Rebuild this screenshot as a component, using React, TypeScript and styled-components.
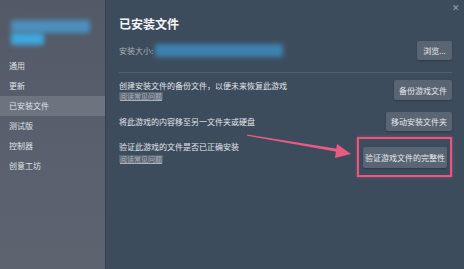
import { FC } from 'react';
import styled, { createGlobalStyle } from 'styled-components';

const GlobalStyle = createGlobalStyle`
  html, body { margin: 0; padding: 0; background: #3d4c5d; }
  body { font-family: 'Noto Sans CJK SC', 'Noto Sans', sans-serif; }
`;

const Frame = styled.div`
  display: flex;
  width: 464px;
  height: 269px;
  overflow: hidden;
`;

const Sidebar = styled.nav`
  width: 105px;
  flex-shrink: 0;
  background: linear-gradient(180deg, #535966 0%, #5a606d 60%, #5e6370 100%);
  display: flex;
  flex-direction: column;
`;

const Profile = styled.div`
  height: 56px;
  padding: 20px 0 0 11px;
  box-sizing: border-box;
  display: flex;
  flex-direction: column;
`;

const BlurBar = styled.div<{ $w: number; $h: number; $c: string }>`
  width: ${({ $w }) => $w}px;
  height: ${({ $h }) => $h}px;
  background: ${({ $c }) => $c};
  filter: blur(2.5px);
  border-radius: 2px;
`;

const NavItem = styled.div<{ $active?: boolean }>`
  height: 20px;
  line-height: 20px;
  padding-left: 9px;
  font-size: 8px;
  color: #dfe2e8;
  background: ${({ $active }) => ($active ? '#6d737f' : 'transparent')};
`;

const Main = styled.main`
  position: relative;
  flex: 1;
  background: #3d4c5d;
  border-left: 1px solid #36414f;
  padding: 16px 12px 0 13px;
  display: flex;
  flex-direction: column;
`;

const Close = styled.div`
  position: absolute;
  top: 1px;
  right: 4px;
  font-size: 9px;
  color: #9aa3ad;
`;

const Title = styled.h2`
  margin: 0;
  font-size: 12px;
  line-height: 16px;
  font-weight: 700;
  color: #f3f4f6;
`;

const Row = styled.div<{ $top: number; $h: number }>`
  display: flex;
  align-items: center;
  justify-content: space-between;
  margin-top: ${({ $top }) => $top}px;
  min-height: ${({ $h }) => $h}px;
`;

const TextBlock = styled.div<{ $gap?: number; $offset?: number }>`
  display: flex;
  flex-direction: column;
  align-items: flex-start;
  gap: ${({ $gap }) => $gap ?? 1}px;
  ${({ $offset }) => ($offset !== undefined ? `align-self: flex-start; margin-top: ${$offset}px;` : '')}
`;

const Desc = styled.span`
  font-size: 8px;
  line-height: 10px;
  color: #e1e4ea;
  white-space: nowrap;
`;

const Label = styled.span`
  font-size: 8px;
  line-height: 10px;
  color: #a8afb8;
`;

const SizeValue = styled.div`
  display: flex;
  align-items: center;
  gap: 2px;
`;

const FaqLink = styled.span`
  font-size: 7px;
  line-height: 8px;
  padding: 0 1px;
  color: #aab0b8;
  background: rgba(160, 168, 178, 0.28);
  text-decoration: underline;
`;

const Button = styled.button<{ $w: number; $h?: number }>`
  width: ${({ $w }) => $w}px;
  height: ${({ $h }) => $h ?? 19}px;
  border: none;
  border-radius: 2px;
  padding: 0;
  background: #5a6573;
  color: #e4e7ec;
  font-family: inherit;
  font-size: 8px;
  box-shadow: 0 1px 2px rgba(0, 0, 0, 0.25);
`;

const Divider = styled.hr`
  border: none;
  height: 1px;
  background: #52606f;
  margin: 12px 0 0 0;
`;

const Highlight = styled.div`
  border: 2px solid #e9577f;
  padding: 3px 3px 7px 4px;
  box-shadow: 0 0 3px rgba(233, 87, 127, 0.5);
`;

const Annotation = styled.svg`
  position: absolute;
  left: 0;
  top: 0;
  width: 100%;
  height: 100%;
  pointer-events: none;
`;

const navItems = ['通用', '更新', '已安装文件', '测试版', '控制器', '创意工坊'];

const App: FC = () => (
  <>
    <GlobalStyle />
    <Frame>
      <Sidebar>
        <Profile>
          <BlurBar $w={79} $h={13} $c={'#4d8fbd'} />
          <BlurBar $w={33} $h={12} $c={'#3fa8df'} />
        </Profile>
        {navItems.map(item => (
          <NavItem key={item} $active={item === '已安装文件'}>
            {item}
          </NavItem>
        ))}
      </Sidebar>
      <Main>
        <Close>✕</Close>
        <Title>已安装文件</Title>
        <Row $top={9} $h={19}>
          <SizeValue>
            <Label>安装大小:</Label>
            <BlurBar $w={128} $h={13} $c={'#3d82b0'} />
          </SizeValue>
          <Button $w={35}>浏览...</Button>
        </Row>
        <Divider />
        <Row $top={7} $h={20}>
          <TextBlock>
            <Desc>创建安装文件的备份文件，以便未来恢复此游戏</Desc>
            <FaqLink>阅读常见问题</FaqLink>
          </TextBlock>
          <Button $w={58} $h={20}>备份游戏文件</Button>
        </Row>
        <Row $top={12} $h={19}>
          <Desc>将此游戏的内容移至另一文件夹或硬盘</Desc>
          <Button $w={66}>移动安装文件夹</Button>
        </Row>
        <Row $top={6} $h={35}>
          <TextBlock $gap={3} $offset={5}>
            <Desc>验证此游戏的文件是否已正确安装</Desc>
            <FaqLink>阅读常见问题</FaqLink>
          </TextBlock>
          <Highlight>
            <Button $w={84} $h={21}>验证游戏文件的完整性</Button>
          </Highlight>
        </Row>
        <Annotation viewBox={'0 0 358 269'}>
          <polygon points="141,134.5 236,149.5 235,152.5 141,135.8" fill="#ea5a82" />
          <polygon points="245,154 231,144 229,158" fill="#ea5a82" />
        </Annotation>
      </Main>
    </Frame>
  </>
);

export default App;
